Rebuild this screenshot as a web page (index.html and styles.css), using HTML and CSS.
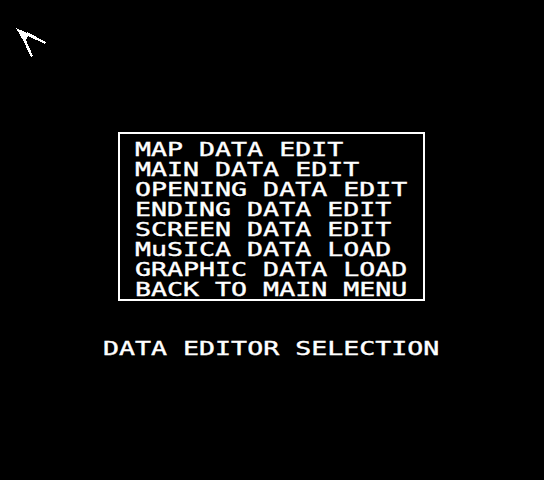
FILE: index.html
```html
<!DOCTYPE html>
<html>
<head>
<meta charset="utf-8">
<link rel="stylesheet" href="styles.css">
</head>
<body>
<div class="screen">
  <svg class="cursor" width="60" height="60" viewBox="0 0 60 60" shape-rendering="crispEdges">
    <polygon fill="#fff" points="16,28 30,34 24,42"/>
    <polygon fill="#fff" points="27,32 46,42 45,44 26,35"/>
    <polygon fill="#fff" points="22,38 25,38 33,56 31,57"/>
  </svg>
  <div class="menu">
    <span class="line">MAP DATA EDIT</span>
    <span class="line">MAIN DATA EDIT</span>
    <span class="line">OPENING DATA EDIT</span>
    <span class="line">ENDING DATA EDIT</span>
    <span class="line">SCREEN DATA EDIT</span>
    <span class="line">MuSICA DATA LOAD</span>
    <span class="line">GRAPHIC DATA LOAD</span>
    <span class="line">BACK TO MAIN MENU</span>
  </div>
  <div class="title"><span class="line">DATA EDITOR SELECTION</span></div>
</div>
</body>
</html>
```
FILE: styles.css
```css
html, body {
  margin: 0;
  padding: 0;
  background: #000;
}
.screen {
  position: relative;
  width: 544px;
  height: 480px;
  background: #000;
  color: #fff;
  font-family: "DejaVu Sans Mono", "Liberation Mono", monospace;
  font-size: 20px;
  line-height: 20px;
  padding-top: 132px;
  box-sizing: border-box;
  overflow: hidden;
}
.cursor {
  position: absolute;
  left: 0;
  top: 0;
}
.menu {
  margin-left: 118px;
  width: 272px;
  border: 2px solid #fff;
  padding: 5px 16px 0 15px;
  display: flex;
  flex-direction: column;
}
.line {
  display: block;
  white-space: pre;
  -webkit-text-stroke: 0.4px #fff;
  transform: scaleX(1.33);
  transform-origin: left center;
}
.title {
  margin-top: 37px;
  padding-left: 103px;
}
```
